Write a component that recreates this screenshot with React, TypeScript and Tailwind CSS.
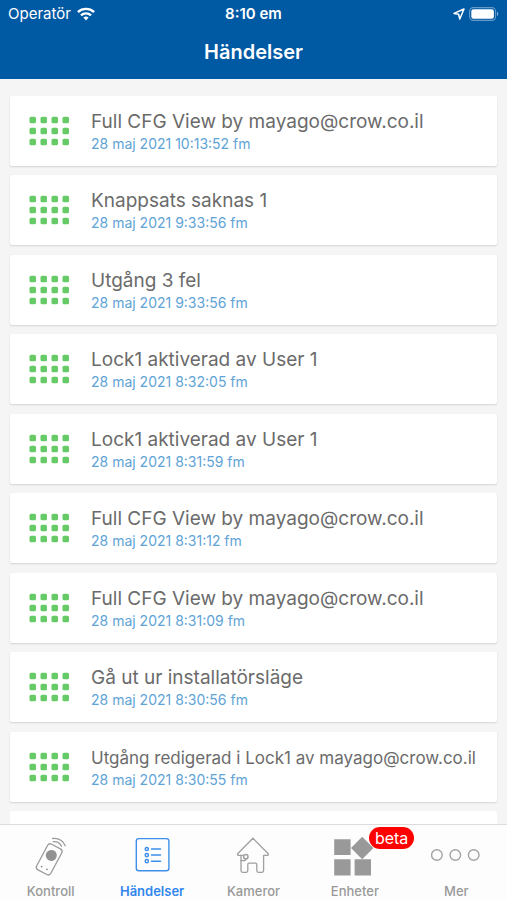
import clsx from 'clsx';

type EventItem = {
  title: string;
  time: string;
  compact?: boolean;
};

const events: EventItem[] = [
  { title: 'Full CFG View by mayago@crow.co.il', time: '28 maj 2021 10:13:52 fm' },
  { title: 'Knappsats saknas 1', time: '28 maj 2021 9:33:56 fm' },
  { title: 'Utgång 3 fel', time: '28 maj 2021 9:33:56 fm' },
  { title: 'Lock1 aktiverad av User 1', time: '28 maj 2021 8:32:05 fm' },
  { title: 'Lock1 aktiverad av User 1', time: '28 maj 2021 8:31:59 fm' },
  { title: 'Full CFG View by mayago@crow.co.il', time: '28 maj 2021 8:31:12 fm' },
  { title: 'Full CFG View by mayago@crow.co.il', time: '28 maj 2021 8:31:09 fm' },
  { title: 'Gå ut ur installatörsläge', time: '28 maj 2021 8:30:56 fm' },
  { title: 'Utgång redigerad i Lock1 av mayago@crow.co.il', time: '28 maj 2021 8:30:55 fm', compact: true },
];

function WifiIcon() {
  return (
    <svg className="h-[14px] w-[18px]" viewBox="0 0 18 14" fill="none" stroke="currentColor" strokeWidth="2.4">
      <path d="M.9 5C5.500.8 12.500.8 17.100 5" />
      <path d="M4 8.300c2.800-2.600 7.200-2.600 10 0" />
      <path d="M6.400 10.600c1.500-1.400 3.700-1.400 5.200 0L9 13.400z" fill="currentColor" stroke="none" />
    </svg>
  );
}

function LocationIcon() {
  return (
    <svg className="h-[12px] w-[12px]" viewBox="0 0 12 12" fill="none" stroke="currentColor" strokeWidth="1.5" strokeLinejoin="round">
      <path d="M11 1 1 5.400l4.600.9L6.800 11z" />
    </svg>
  );
}

function BatteryIcon() {
  return (
    <svg className="h-[14px] w-[30px]" viewBox="0 0 30 14">
      <rect x="0.6" y="0.6" width="26" height="12.8" rx="3.8" fill="none" stroke="#fff" strokeOpacity="0.4" strokeWidth="1.1" />
      <rect x="2.3" y="2.3" width="22.6" height="9.4" rx="2.2" fill="#fff" />
      <path d="M28 4.800v4.400c1.700-.6 1.700-3.800 0-4.400z" fill="#fff" fillOpacity="0.5" />
    </svg>
  );
}

function KeypadIcon() {
  return (
    <svg className="h-[30px] w-[40px] shrink-0" viewBox="0 0 40 30" fill="#66cb66">
      {[0, 11, 22].map((y) =>
        [0, 11, 22, 33].map((x) => <rect key={`${x}-${y}`} x={x + 0.5} y={y + 0.7} width="6.5" height="6.5" rx="1.5" />),
      )}
    </svg>
  );
}

function RemoteIcon() {
  return (
    <svg className="h-10 w-10" viewBox="0 0 40 40" overflow="visible" fill="none" stroke="#9b9b9b" strokeWidth="1.3" strokeLinecap="round">
      <g transform="rotate(28 18.200 24.400)">
        <rect x="10.200" y="9.900" width="16" height="29" rx="3" />
        <circle cx="18.200" cy="19.900" r="5.500" fill="#929292" stroke="none" />
        <circle cx="14.900" cy="34.300" r="0.900" fill="#929292" stroke="none" />
        <circle cx="20.900" cy="34.300" r="0.900" fill="#929292" stroke="none" />
      </g>
      <path d="M22.200 6.600c3.800-.3 6.800 1.300 8.300 4.600" />
      <path d="M21.600 3.500c5.800-.6 10.300 2 12.600 7.200" />
    </svg>
  );
}

function ListIcon() {
  return (
    <svg className="h-10 w-10" viewBox="0 0 40 40" fill="none" stroke="#3d8fea" strokeWidth="1.4" strokeLinecap="round">
      <rect x="4.300" y="3.600" width="32.600" height="32.200" rx="2.500" />
      {[14, 20.1, 26.2].map((y) => (
        <g key={y}>
          <circle cx="14.800" cy={y} r="1.600" strokeWidth="1.500" />
          <path d={`M19.500 ${y}h9`} strokeWidth="1.500" />
        </g>
      ))}
    </svg>
  );
}

function HouseIcon() {
  return (
    <svg className="h-10 w-10" viewBox="0 0 40 40" fill="none" stroke="#9f9f9f" strokeWidth="1.3" strokeLinejoin="round">
      <path d="M8 24.800V35.600c0 1 .6 1.700 1.600 1.700h3.600c1 0 1.600-.7 1.600-1.700v-6.200c0-.8.4-1.200 1.200-1.200h6.600c.8 0 1.200.4 1.200 1.200v6.200c0 1 .6 1.700 1.600 1.700H29c1 0 1.600-.7 1.600-1.700V20.300h3.600c1.400 0 1.600-1 .8-1.800L19.900 3.300 4.900 18.500c-.8.8-.5 1.800.8 1.800h4.600" />
      <circle cx="12.800" cy="21.700" r="2.200" strokeWidth="1.5" />
      <path d="M8 20.300v5.300h2.800c1.400 0 2-.6 2-1.900" />
    </svg>
  );
}

function DevicesIcon() {
  return (
    <svg className="h-10 w-10" viewBox="0 0 40 40" overflow="visible" fill="#999">
      <path d="M-.8 4.200h16.400v15.900H-.8zM-.8 24.200h16.400v16.300H-.8zM19.600 24.200H36v16.300H19.600zM27.200 1.800 38.400 13 27.200 24.200 16 13z" />
    </svg>
  );
}

function MoreIcon() {
  return (
    <svg className="h-10 w-[50px]" viewBox="0 0 50 40" fill="none" stroke="#a3a3a3" strokeWidth="1.4">
      <circle cx="5.900" cy="20" r="5.300" />
      <circle cx="24.300" cy="20" r="5.300" />
      <circle cx="42.700" cy="20" r="5.300" />
    </svg>
  );
}

const tabs = [
  { label: 'Kontroll', Icon: RemoteIcon },
  { label: 'Händelser', Icon: ListIcon, active: true },
  { label: 'Kameror', Icon: HouseIcon },
  { label: 'Enheter', Icon: DevicesIcon, badge: 'beta' },
  { label: 'Mer', Icon: MoreIcon },
];

function EventCard({ title, time, compact }: EventItem) {
  return (
    <li className="flex h-[70px] shrink-0 items-center gap-[22px] rounded-xs bg-white pl-[19px] shadow-[0_1px_2px_rgba(0,0,0,0.14)]">
      <KeypadIcon />
      <div className="min-w-0 pt-0.5 whitespace-nowrap">
        <h2 className={clsx('leading-6 text-[#6b6b6b]', compact ? 'text-[17px]' : 'text-[19px]')}>{title}</h2>
        <p className="text-sm leading-5 text-[#60a3d6]">{time}</p>
      </div>
    </li>
  );
}

export default function App() {
  return (
    <div className="flex h-screen flex-col bg-[#f5f5f5] font-['Inter',sans-serif]">
      <header className="shrink-0 bg-[#0059a3] text-white">
        <div className="grid h-7 grid-cols-3 items-center px-2 text-[15px]">
          <div className="flex items-center gap-1.5">
            <span>Operatör</span>
            <WifiIcon />
          </div>
          <span className="text-center font-semibold">8:10 em</span>
          <div className="flex items-center justify-end gap-1">
            <LocationIcon />
            <BatteryIcon />
          </div>
        </div>
        <h1 className="h-[51px] pt-2.5 text-center text-xl leading-7 font-semibold">Händelser</h1>
      </header>

      <main className="min-h-0 flex-1 overflow-hidden px-2.5 pt-[17px]">
        <ul className="flex h-full flex-col justify-between">
          {events.map((event, i) => (
            <EventCard key={i} {...event} />
          ))}
          {/* top edge of the next card, cut off by the tab bar */}
          <li className="h-[13px] shrink-0 rounded-t-xs bg-white" />
        </ul>
      </main>

      <nav className="grid h-[76px] shrink-0 grid-cols-5 border-t border-[#dcdcdc] bg-[#fdfdfd]">
        {tabs.map(({ label, Icon, active, badge }) => (
          <a
            key={label}
            href="#"
            className={clsx(
              'flex flex-col items-center gap-2 pt-2.5 text-[13px] leading-4',
              active ? 'font-semibold text-[#3186ed]' : 'font-medium text-[#999]',
            )}
          >
            <span className="relative">
              <Icon />
              {badge && (
                <span className="absolute -top-2 left-[34px] rounded-full bg-[#fe0000] px-1.5 text-base leading-[22px] font-normal text-white">
                  {badge}
                </span>
              )}
            </span>
            {label}
          </a>
        ))}
      </nav>
    </div>
  );
}
